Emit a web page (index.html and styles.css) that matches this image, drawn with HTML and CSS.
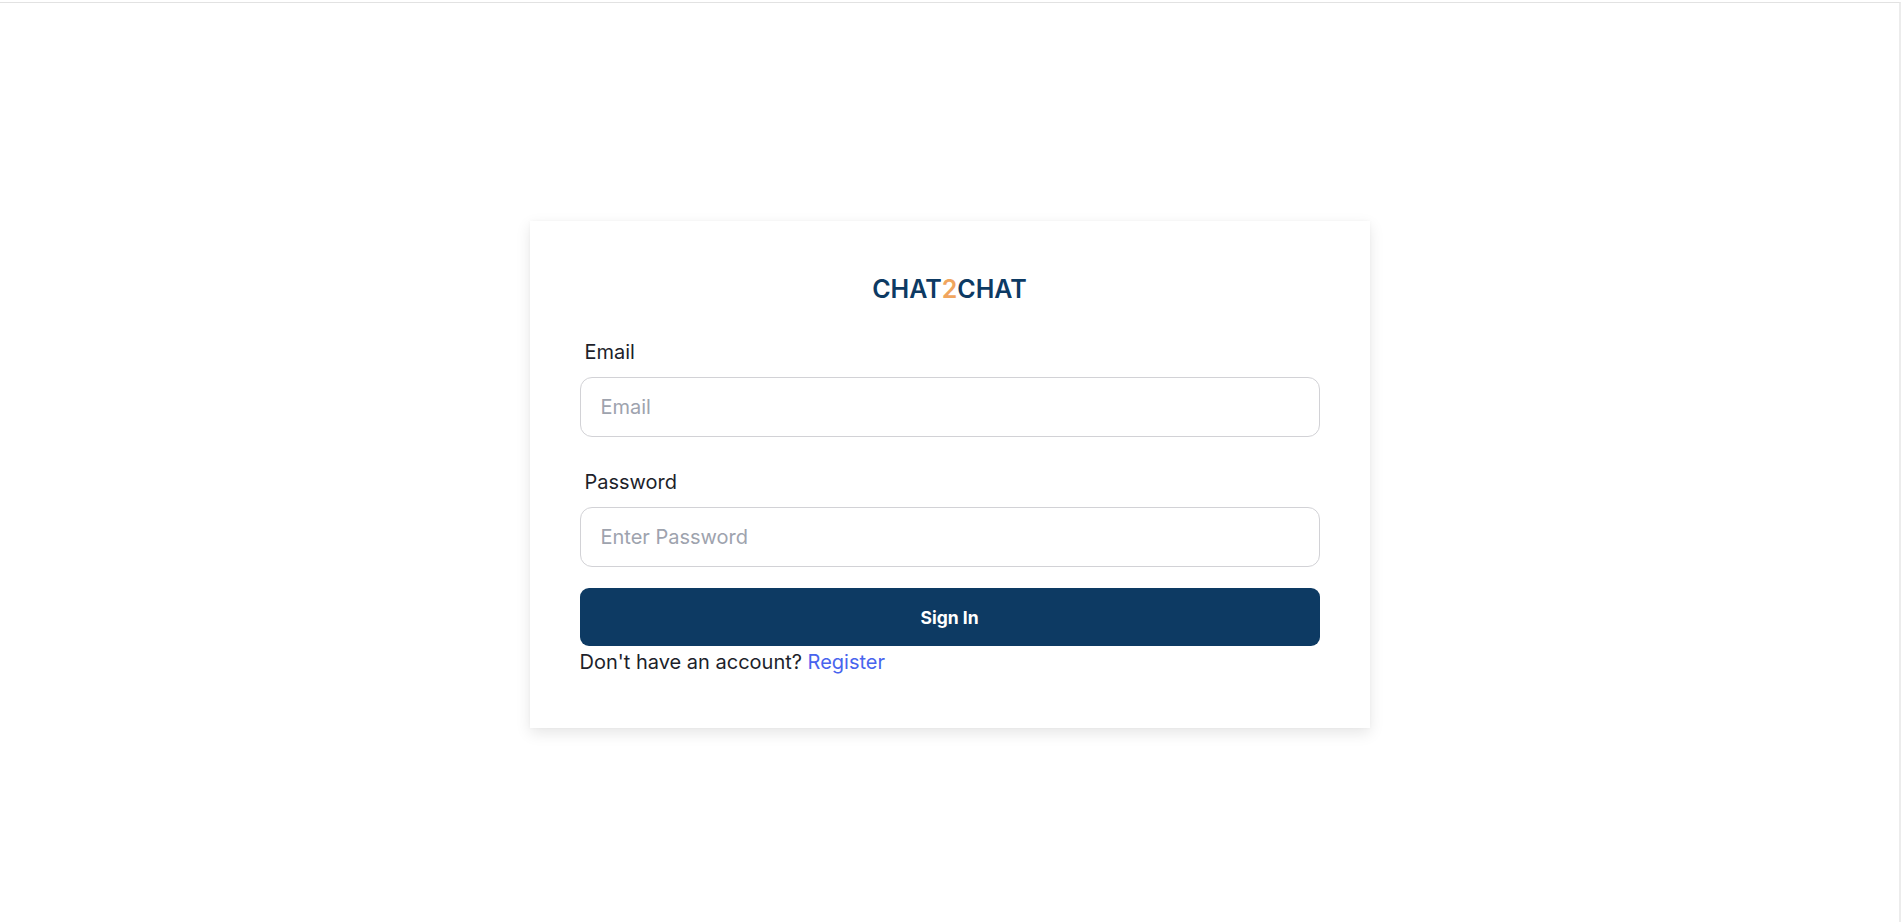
FILE: index.html
```html
<!DOCTYPE html>
<html lang="en">
<head>
<meta charset="utf-8">
<title>Chat2Chat - Sign In</title>
<link rel="stylesheet" href="styles.css">
</head>
<body>
<div class="frame">
  <div class="card">
    <h1 class="brand">CHAT<span class="brand-two">2</span>CHAT</h1>
    <form class="form">
      <div class="field field-email">
        <label class="label" for="email">Email</label>
        <input class="input" id="email" type="email" placeholder="Email">
      </div>
      <div class="field field-password">
        <label class="label" for="password">Password</label>
        <input class="input" id="password" type="password" placeholder="Enter Password">
      </div>
      <button class="btn" type="button">Sign In</button>
    </form>
    <p class="footer">Don't have an account? <a class="link" href="#">Register</a></p>
  </div>
</div>
</body>
</html>
```

FILE: styles.css
```css
* { box-sizing: border-box; }

html, body {
  margin: 0;
  padding: 0;
  background: #ffffff;
}

body {
  font-family: Inter, "Noto Sans", "Liberation Sans", sans-serif;
  color: #1d1f2b;
}

.frame {
  margin-top: 2px;
  height: 920px;
  border-top: 1px solid #e2e2e2;
  border-right: 2px solid #ececec;
  display: flex;
  justify-content: center;
  align-items: flex-start;
  padding-top: 218px;
}

.card {
  width: 840px;
  background: #ffffff;
  padding: 53px 50px 54px;
  box-shadow: 0 5px 14px rgba(0, 0, 0, 0.10), 0 0 4px rgba(0, 0, 0, 0.03);
}

.brand {
  margin: 0;
  font-size: 25px;
  line-height: 30px;
  font-weight: 600;
  text-align: center;
  color: #0d3a63;
  letter-spacing: 0;
}

.brand-two {
  color: #f0a55e;
}

.form {
  margin: 36px 0 0;
  display: flex;
  flex-direction: column;
}

.field {
  display: flex;
  flex-direction: column;
}

.field-email {
  margin-bottom: 33px;
}

.field-password {
  margin-bottom: 21px;
}

.label {
  font-size: 20px;
  line-height: 24px;
  padding-left: 5px;
  color: #1d1f2b;
  margin-bottom: 13px;
}

.input {
  height: 60px;
  width: 100%;
  border: 1px solid #d2d2d6;
  border-radius: 12px;
  padding: 0 20px;
  font-family: Inter, "Noto Sans", "Liberation Sans", sans-serif;
  font-size: 20px;
  color: #1d1f2b;
  background: #ffffff;
  outline: none;
}

.input::placeholder {
  color: #9ea3ae;
}

.btn {
  height: 58px;
  width: 100%;
  border: none;
  border-radius: 9px;
  background: #0d3a63;
  color: #ffffff;
  font-family: Inter, "Noto Sans", "Liberation Sans", sans-serif;
  font-size: 17.5px;
  font-weight: 700;
  cursor: pointer;
}

.footer {
  margin: 4px 0 0;
  font-size: 20px;
  line-height: 24px;
  color: #1d1f2b;
}

.link {
  color: #4864ee;
  text-decoration: none;
}
```
